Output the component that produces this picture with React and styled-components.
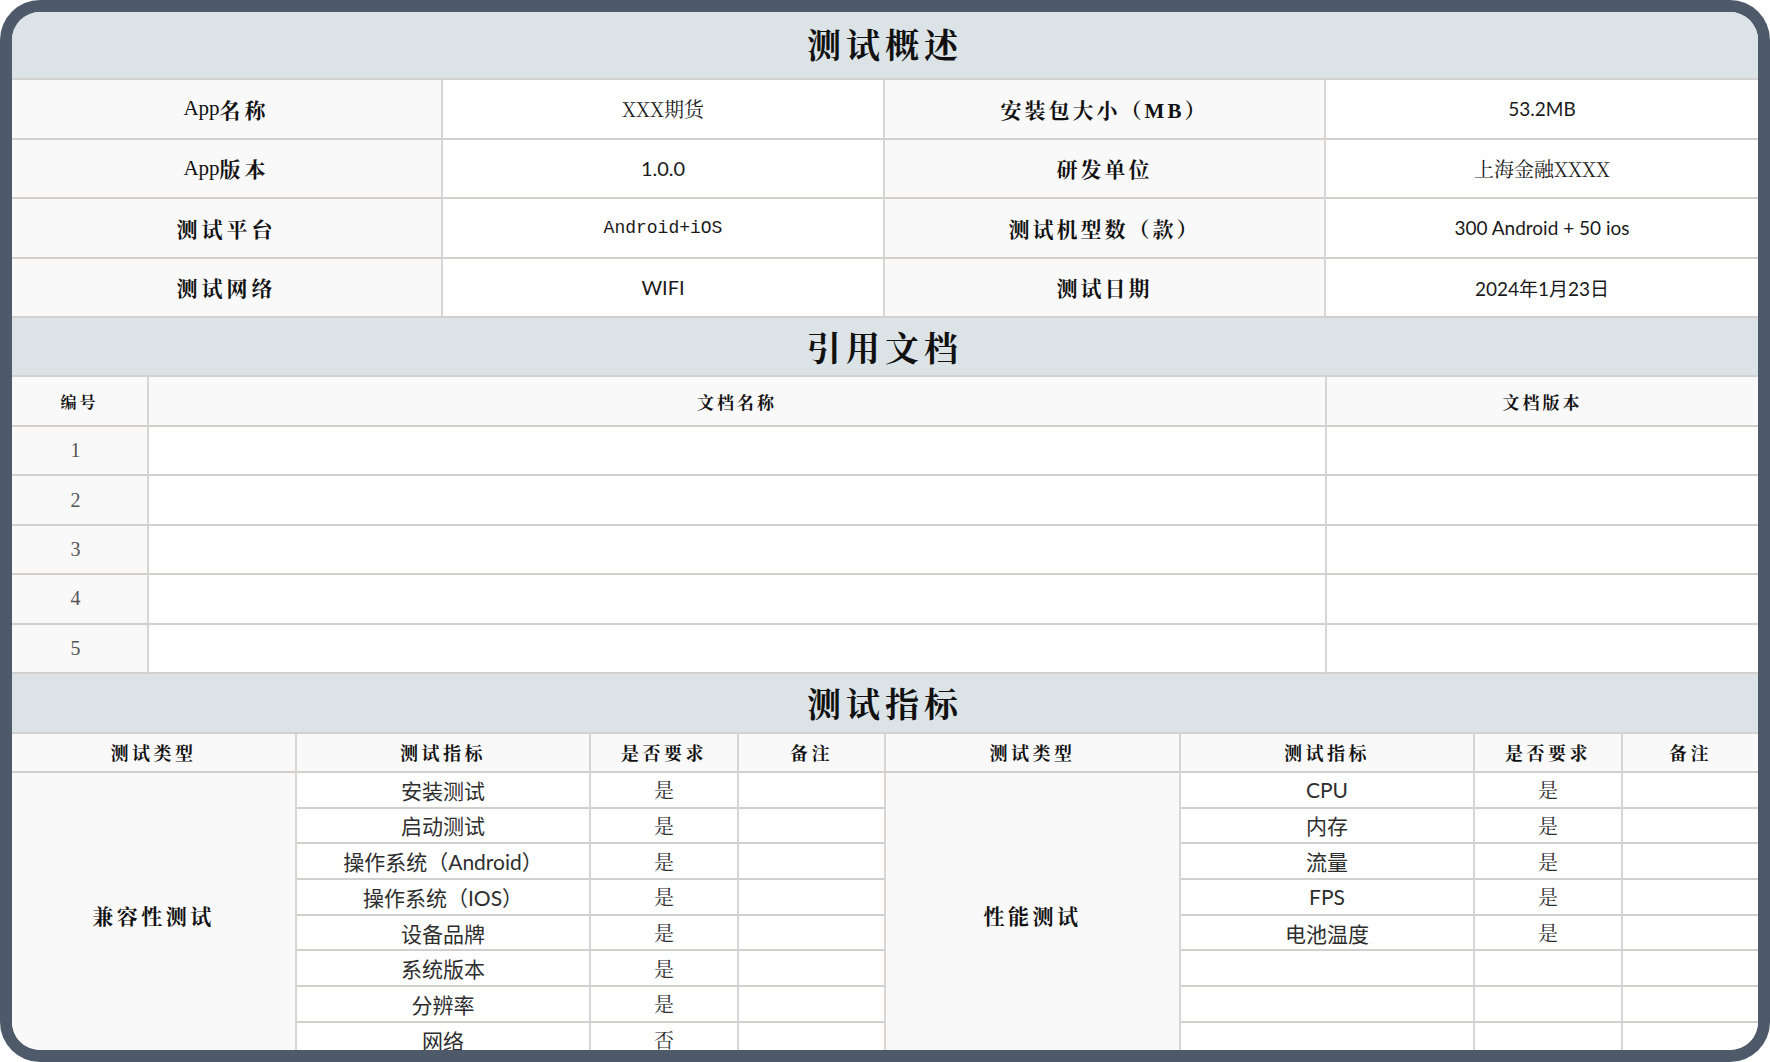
import React from 'react'
import styled, { createGlobalStyle } from 'styled-components'

const GlobalStyle = createGlobalStyle`
  html, body {
    margin: 0;
    padding: 0;
    background: #ffffff;
  }
  * {
    box-sizing: border-box;
  }
`

const SERIF_CJK = '"Liberation Serif", "Noto Serif CJK SC", "Noto Sans CJK SC", serif'
const SANS_CJK = '"Lato", "Noto Sans CJK SC", sans-serif'
const SONG_CJK = '"Noto Serif CJK SC", "Noto Sans CJK SC", serif'
const MONO = '"Liberation Mono", "Noto Sans CJK SC", monospace'

const fonts = {
  label: SERIF_CJK,
  sans: SANS_CJK,
  song: SONG_CJK,
  mono: MONO,
}

const Frame = styled.div`
  width: 1770px;
  height: 1062px;
  padding: 12px;
  background: #4e5a6a;
  border-radius: 40px;
`

const Sheet = styled.div`
  height: 100%;
  display: flex;
  flex-direction: column;
  overflow: hidden;
  border-radius: 28px;
  background: #ffffff;
`

const SectionTitle = styled.div`
  flex: 0 0 ${({ $h }) => $h}px;
  display: flex;
  align-items: center;
  justify-content: center;
  padding-bottom: ${({ $lift }) => $lift || 0}px;
  background: #dbe3e6;
  border-bottom: 2px solid #d2d2d2;
  font-family: ${SONG_CJK};
  font-size: 34px;
  font-weight: 700;
  letter-spacing: 5px;
  color: #111111;
`

const Grid = styled.div`
  flex-shrink: 0;
  display: grid;
  grid-template-columns: ${({ $cols }) => $cols};
  grid-auto-rows: ${({ $row }) => $row}px;
`

const Cell = styled.div`
  display: flex;
  align-items: center;
  justify-content: center;
  white-space: nowrap;
  overflow: hidden;
  background: ${({ $shade }) => ($shade ? '#f9f9f9' : '#ffffff')};
  border-bottom: 2px solid #d2d0ce;
  border-right: ${({ $end }) => ($end ? 'none' : '2px solid #d9d5d2')};
  grid-row: ${({ $span }) => ($span ? `span ${$span}` : 'auto')};
  color: ${({ $soft }) => ($soft ? '#2e2e2e' : '#1a1a1a')};
  font-family: ${({ $font }) => fonts[$font] || SANS_CJK};
  font-size: ${({ $size }) => $size || 19}px;
`

const LabelCell = styled(Cell)`
  color: #111111;
  font-weight: 700;
  letter-spacing: ${({ $gap }) => ($gap == null ? 3 : $gap)}px;
`

const Plain = styled.span`
  font-weight: 400;
  letter-spacing: 0;
`

const NumCell = styled(Cell)`
  color: #555555;
  font-family: "Liberation Serif", serif;
  font-size: 20px;
  padding-right: 8px;
`

const info = [
  { k1: 'App名称', v1: 'XXX期货', f1: 'song', k2: '安装包大小（MB）', v2: '53.2MB', f2: 'sans' },
  { k1: 'App版本', v1: '1.0.0', f1: 'sans', k2: '研发单位', v2: '上海金融XXXX', f2: 'song' },
  { k1: '测试平台', v1: 'Android+iOS', f1: 'mono', k2: '测试机型数（款）', v2: '300 Android + 50 ios', f2: 'sans' },
  { k1: '测试网络', v1: 'WIFI', f1: 'sans', k2: '测试日期', v2: '2024年1月23日', f2: 'sans' },
]

const compat = [
  ['安装测试', '是'],
  ['启动测试', '是'],
  ['操作系统（Android）', '是'],
  ['操作系统（IOS）', '是'],
  ['设备品牌', '是'],
  ['系统版本', '是'],
  ['分辨率', '是'],
  ['网络', '否'],
]

const perf = [
  ['CPU', '是'],
  ['内存', '是'],
  ['流量', '是'],
  ['FPS', '是'],
  ['电池温度', '是'],
  ['', ''],
  ['', ''],
  ['', ''],
]

const INFO_COLS = '431px 442px 441px 1fr'
const DOC_COLS = '137px 1178px 1fr'
const METRIC_COLS = '285px 294px 148px 147px 295px 294px 148px 1fr'
const metricHeads = ['测试类型', '测试指标', '是否要求', '备注', '测试类型', '测试指标', '是否要求', '备注']

// "App名称" -> Latin part in regular weight, as in the sheet
const labelText = (text) => {
  if (!text.startsWith('App')) return text
  return (
    <>
      <Plain>App</Plain>
      {text.slice(3)}
    </>
  )
}

const App = () => (
  <>
    <GlobalStyle />
    <Frame>
      <Sheet>
        <SectionTitle $h={68} $lift={4}>测试概述</SectionTitle>
        <Grid $cols={INFO_COLS} $row={59.5}>
          {info.map((r) => (
            <React.Fragment key={r.k1}>
              <LabelCell $shade $font="label" $size={21} $gap={4}>{labelText(r.k1)}</LabelCell>
              <Cell $font={r.f1} $size={r.f1 === 'mono' ? 18 : 20}>{r.v1}</Cell>
              <LabelCell $shade $font="label" $size={21}>{r.k2}</LabelCell>
              <Cell $end $font={r.f2} $size={r.f2 === 'song' ? 20 : 19}>{r.v2}</Cell>
            </React.Fragment>
          ))}
        </Grid>

        <SectionTitle $h={59}>引用文档</SectionTitle>
        <Grid $cols={DOC_COLS} $row={50}>
          <LabelCell $shade $font="song" $size={16} $gap={3}>编号</LabelCell>
          <LabelCell $shade $font="song" $size={17} $gap={3}>文档名称</LabelCell>
          <LabelCell $shade $end $font="song" $size={17} $gap={3}>文档版本</LabelCell>
        </Grid>
        <Grid $cols={DOC_COLS} $row={49.4}>
          {[1, 2, 3, 4, 5].map((n) => (
            <React.Fragment key={n}>
              <NumCell $shade>{n}</NumCell>
              <Cell />
              <Cell $end />
            </React.Fragment>
          ))}
        </Grid>

        <SectionTitle $h={60}>测试指标</SectionTitle>
        <Grid $cols={METRIC_COLS} $row={39}>
          {metricHeads.map((h, i) => (
            <LabelCell key={i} $shade $end={i === 7} $font="song" $size={18} $gap={3.5}>{h}</LabelCell>
          ))}
        </Grid>
        <Grid $cols={METRIC_COLS} $row={35.7}>
          <LabelCell $shade $span={8} $font="song" $size={21} $gap={3.5}>兼容性测试</LabelCell>
          <Cell $soft $size={21}>{compat[0][0]}</Cell>
          <Cell $soft $font="song" $size={20}>{compat[0][1]}</Cell>
          <Cell />
          <LabelCell $shade $span={8} $font="song" $size={21} $gap={3.5}>性能测试</LabelCell>
          {compat.map((c, i) => (
            <React.Fragment key={i}>
              {i > 0 && (
                <>
                  <Cell $soft $size={21}>{c[0]}</Cell>
                  <Cell $soft $font="song" $size={20}>{c[1]}</Cell>
                  <Cell />
                </>
              )}
              <Cell $soft $size={21}>{perf[i][0]}</Cell>
              <Cell $soft $font="song" $size={20}>{perf[i][1]}</Cell>
              <Cell $end />
            </React.Fragment>
          ))}
        </Grid>
      </Sheet>
    </Frame>
  </>
)

export default App
